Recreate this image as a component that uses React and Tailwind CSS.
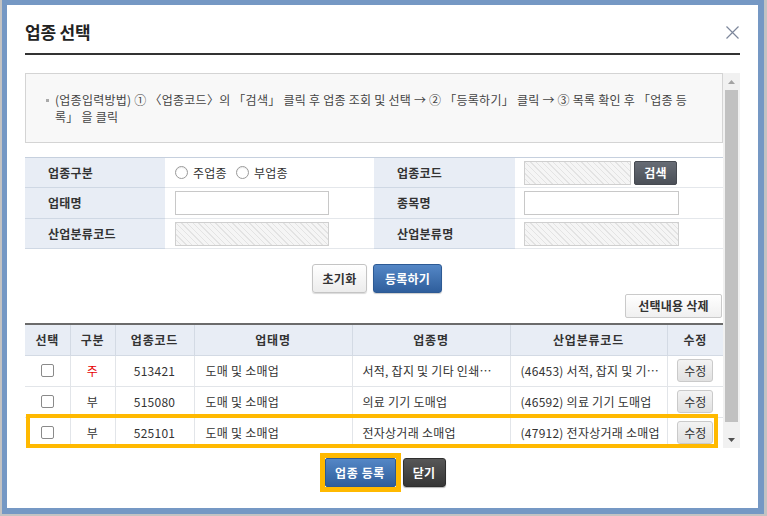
import React from 'react';

const hatch = "bg-[repeating-linear-gradient(45deg,#f5f5f5_0px,#f5f5f5_3px,#e3e3e3_3px,#e3e3e3_4px)]";

const rows = [
    { kind: '주', code: '513421', type: '도매 및 소매업', item: '서적, 잡지 및 기타 인쇄물 도매업', ind: '(46453) 서적, 잡지 및 기타 인쇄물 도매업' },
    { kind: '부', code: '515080', type: '도매 및 소매업', item: '의료 기기 도매업', ind: '(46592) 의료 기기 도매업' },
    { kind: '부', code: '525101', type: '도매 및 소매업', item: '전자상거래 소매업', ind: '(47912) 전자상거래 소매업' },
];

function Radio({ label }) {
    return (
        <label className="flex items-center gap-[5px]">
            <span className="w-[13px] h-[13px] rounded-full border border-[#9a9a9a] bg-white shadow-[inset_0_1px_1px_rgba(0,0,0,0.08)]"></span>
            <span>{label}</span>
        </label>
    );
}

function Label({ children }) {
    return <td className="bg-[#e8edf5] pl-[23px] font-bold text-[#333] border-b border-[#cfd8e4]">{children}</td>;
}

function Cell({ children }) {
    return <td className="border-b border-[#e4e7eb]">{children}</td>;
}

export default function App() {
    return (
        <div className="w-[767px] h-[516px] bg-[#c3c3c3] pl-[2px] pr-[3px] pb-[2px] font-['Noto_Sans_CJK_KR',sans-serif] text-[12px] tracking-[0.25px] text-[#333]">
            <div className="h-full bg-white border-[#7598c4] border-t-[5px] border-l-[5px] border-r-[6px] border-b-[6px] px-[18px] flex flex-col">
                {/* Header */}
                <div className="h-[50px] pt-[6px] flex items-center justify-between border-b-2 border-[#333]">
                    <h1 className="text-[17px] font-bold text-[#222] tracking-[-0.2px]">업종 선택</h1>
                    <svg width="13" height="13" viewBox="0 0 13 13" className="mr-[1px]">
                        <path d="M0.5 0.5 L12.5 12.5 M12.5 0.5 L0.5 12.5" stroke="#7d879b" strokeWidth="1.2" />
                    </svg>
                </div>

                {/* Scroll area */}
                <div className="mt-[18px] h-[375px] flex">
                    <div className="w-[698px] overflow-hidden">
                        <div className="h-[70px] border border-[#d4d4d4] bg-[#f8f8f8] pl-[20px] pr-[4px] pt-[17px] leading-[17px] text-[#444] flex gap-[6px]">
                            <span className="w-[3px] h-[3px] bg-[#aaa] mt-[8px] shrink-0"></span>
                            <p className="whitespace-nowrap">
                                (업종입력방법) ① 〈업종코드〉의 「검색」 클릭 후 업종 조회 및 선택 → ② 「등록하기」 클릭 → ③ 목록 확인 후 「업종 등<br />록」 을 클릭
                            </p>
                        </div>

                        <table className="mt-[14px] w-full table-fixed border-collapse border-t border-[#c6d0de]">
                            <colgroup>
                                <col className="w-[140px]" />
                                <col className="w-[209px]" />
                                <col className="w-[141px]" />
                                <col className="w-[208px]" />
                            </colgroup>
                            <tbody>
                                <tr className="h-[30px]">
                                    <Label>업종구분</Label>
                                    <Cell>
                                        <div className="flex items-center gap-[9px] pl-[10px]">
                                            <Radio label="주업종" />
                                            <Radio label="부업종" />
                                        </div>
                                    </Cell>
                                    <Label>업종코드</Label>
                                    <Cell>
                                        <div className="flex items-center pl-[9px] gap-[3px]">
                                            <div className={`w-[107px] h-[24px] border border-[#cfcfcf] ${hatch}`}></div>
                                            <button className="w-[43px] h-[24px] rounded-[2px] bg-gradient-to-b from-[#676c75] to-[#4b5058] text-white font-bold border border-[#464a51]">검색</button>
                                        </div>
                                    </Cell>
                                </tr>
                                <tr className="h-[31px]">
                                    <Label>업태명</Label>
                                    <Cell>
                                        <div className="pl-[10px]">
                                            <div className="w-[154px] h-[24px] border border-[#c8c8c8] bg-white"></div>
                                        </div>
                                    </Cell>
                                    <Label>종목명</Label>
                                    <Cell>
                                        <div className="pl-[9px]">
                                            <div className="w-[155px] h-[24px] border border-[#c8c8c8] bg-white"></div>
                                        </div>
                                    </Cell>
                                </tr>
                                <tr className="h-[30px]">
                                    <Label>산업분류코드</Label>
                                    <Cell>
                                        <div className="pl-[10px]">
                                            <div className={`w-[154px] h-[24px] border border-[#cfcfcf] ${hatch}`}></div>
                                        </div>
                                    </Cell>
                                    <Label>산업분류명</Label>
                                    <Cell>
                                        <div className="pl-[9px]">
                                            <div className={`w-[155px] h-[24px] border border-[#cfcfcf] ${hatch}`}></div>
                                        </div>
                                    </Cell>
                                </tr>
                            </tbody>
                        </table>

                        <div className="mt-[15px] flex justify-center gap-[6px] pl-[6px]">
                            <button className="w-[55px] h-[29px] rounded-[3px] border border-[#c4c4c4] bg-gradient-to-b from-white to-[#ececec] font-bold text-[#333] shadow-[0_1px_1px_rgba(0,0,0,0.15)]">초기화</button>
                            <button className="w-[69px] h-[29px] rounded-[3px] border border-[#2d5a94] bg-gradient-to-b from-[#5487c6] to-[#2f5e9c] font-bold text-white shadow-[0_1px_1px_rgba(0,0,0,0.2)]">등록하기</button>
                        </div>

                        <div className="mt-[1px] flex justify-end pr-[1px]">
                            <button className="w-[97px] h-[24px] rounded-[2px] border border-[#cacaca] bg-gradient-to-b from-white to-[#f0f0f0] font-bold text-[#333]">선택내용 삭제</button>
                        </div>

                        <div className="relative mt-[5px]">
                            <table className="w-full table-fixed border-collapse border-t-2 border-[#6b6b6b]">
                                <colgroup>
                                    <col className="w-[45px]" />
                                    <col className="w-[45px]" />
                                    <col className="w-[79px]" />
                                    <col className="w-[158px]" />
                                    <col className="w-[158px]" />
                                    <col className="w-[157px]" />
                                    <col className="w-[56px]" />
                                </colgroup>
                                <thead>
                                    <tr className="h-[31px] bg-[#e8edf5] font-bold">
                                        {['선택', '구분', '업종코드', '업태명', '업종명', '산업분류코드', '수정'].map((h, i) => (
                                            <th key={h} className={`text-center font-bold tracking-[0.8px] border-b border-[#d3dae4] ${i < 6 ? 'border-r' : ''}`}>{h}</th>
                                        ))}
                                    </tr>
                                </thead>
                                <tbody>
                                    {rows.map((r) => (
                                        <tr key={r.code} className="h-[31px]">
                                            <td className="border-b border-r border-[#e2e5e9]">
                                                <div className="flex justify-center">
                                                    <span className="w-[13px] h-[13px] rounded-[2px] border border-[#8a8a8a] bg-white"></span>
                                                </div>
                                            </td>
                                            <td className={`border-b border-r border-[#e2e5e9] text-center ${r.kind === '주' ? 'text-[#e60000]' : 'text-[#333]'}`}>{r.kind}</td>
                                            <td className="border-b border-r border-[#e2e5e9] text-center">{r.code}</td>
                                            <td className="border-b border-r border-[#e2e5e9] pl-[11px]">{r.type}</td>
                                            <td className="border-b border-r border-[#e2e5e9] pl-[10px] pr-[8px] truncate">{r.item}</td>
                                            <td className="border-b border-r border-[#e2e5e9] pl-[10px] pr-[6px] truncate">{r.ind}</td>
                                            <td className="border-b border-[#e2e5e9]">
                                                <div className="flex justify-center">
                                                    <button className="w-[36px] h-[23px] rounded-[3px] border border-[#cacaca] bg-gradient-to-b from-[#f3f3f3] to-[#e1e1e1] text-[#333] tracking-[0px]">수정</button>
                                                </div>
                                            </td>
                                        </tr>
                                    ))}
                                </tbody>
                            </table>
                            {/* highlight of the third row */}
                            <div className="absolute left-[1px] top-[91px] w-[692px] h-[34px] border-[4px] border-[#ffb900] pointer-events-none"></div>
                        </div>
                    </div>

                    {/* Scrollbar */}
                    <div className="w-[17px] bg-[#f1f1f1] flex flex-col">
                        <div className="h-[17px] flex items-center justify-center">
                            <svg width="7" height="4" viewBox="0 0 7 4"><path d="M0 4 L3.5 0 L7 4 Z" fill="#a3a3a3" /></svg>
                        </div>
                        <div className="h-[332px] mx-[2px] bg-[#c1c1c1]"></div>
                        <div className="flex-1"></div>
                        <div className="h-[17px] flex items-center justify-center">
                            <svg width="7" height="4" viewBox="0 0 7 4"><path d="M0 0 L7 0 L3.5 4 Z" fill="#505050" /></svg>
                        </div>
                    </div>
                </div>

                {/* Bottom buttons */}
                <div className="mt-[5px] flex justify-center items-center gap-[2px]">
                    <div className="border-[5px] border-[#ffb900]">
                        <button className="w-[71px] h-[29px] rounded-[2px] border border-[#2d5a94] bg-gradient-to-b from-[#5487c6] to-[#2f5e9c] font-bold text-white block tracking-[0.6px]">업종 등록</button>
                    </div>
                    <button className="w-[43px] h-[29px] rounded-[3px] border border-[#2e2e2e] bg-gradient-to-b from-[#575757] to-[#363636] font-bold text-white shadow-[0_1px_1px_rgba(0,0,0,0.3)]">닫기</button>
                </div>
            </div>
        </div>
    );
}
